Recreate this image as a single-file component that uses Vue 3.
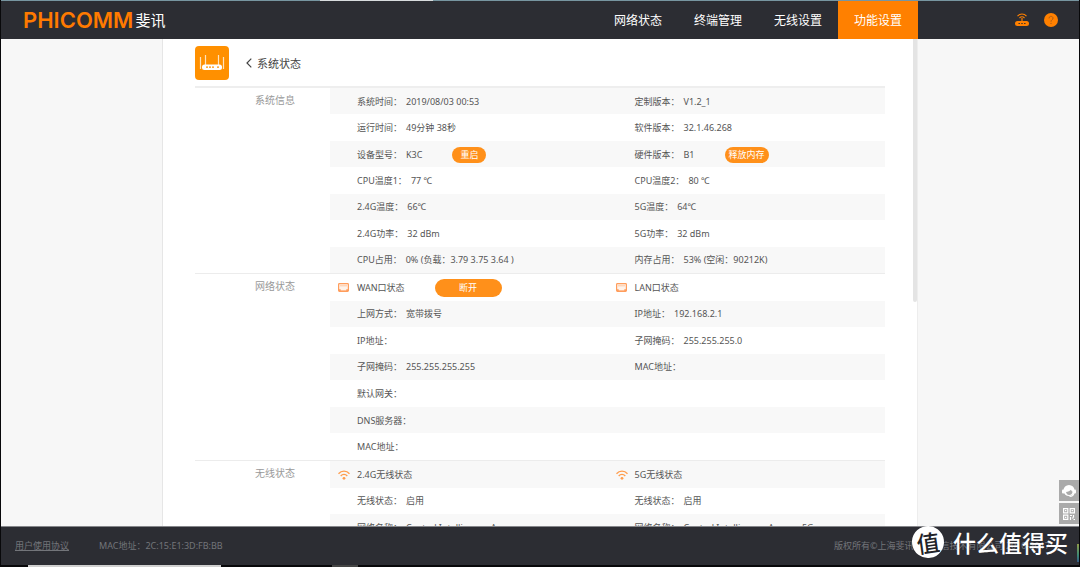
<script setup>
const sections = [
  {
    title: '系统信息',
    rows: [
      [{ label: '系统时间：', value: '2019/08/03 00:53' }, { label: '定制版本：', value: 'V1.2_1' }],
      [{ label: '运行时间：', value: '49分钟 38秒' }, { label: '软件版本：', value: '32.1.46.268' }],
      [
        { label: '设备型号：', value: 'K3C', action: '重启' },
        { label: '硬件版本：', value: 'B1', action: '释放内存', fit: true },
      ],
      [{ label: 'CPU温度1：', value: '77 ℃' }, { label: 'CPU温度2：', value: '80 ℃' }],
      [{ label: '2.4G温度：', value: '66℃' }, { label: '5G温度：', value: '64℃' }],
      [{ label: '2.4G功率：', value: '32 dBm' }, { label: '5G功率：', value: '32 dBm' }],
      [
        { label: 'CPU占用：', value: '0% (负载：3.79 3.75 3.64 )' },
        { label: '内存占用：', value: '53% (空闲：90212K)' },
      ],
    ],
  },
  {
    title: '网络状态',
    rows: [
      [
        { icon: 'port', label: 'WAN口状态', action: '断开', wide: true },
        { icon: 'port', label: 'LAN口状态' },
      ],
      [{ label: '上网方式：', value: '宽带拨号' }, { label: 'IP地址：', value: '192.168.2.1' }],
      [{ label: 'IP地址：' }, { label: '子网掩码：', value: '255.255.255.0' }],
      [{ label: '子网掩码：', value: '255.255.255.255' }, { label: 'MAC地址：' }],
      [{ label: '默认网关：' }],
      [{ label: 'DNS服务器：' }],
      [{ label: 'MAC地址：' }],
    ],
  },
  {
    title: '无线状态',
    rows: [
      [{ icon: 'wifi', label: '2.4G无线状态' }, { icon: 'wifi', label: '5G无线状态' }],
      [{ label: '无线状态：', value: '启用' }, { label: '无线状态：', value: '启用' }],
      [
        { label: '网络名称：', value: 'Central Intelligence Agency' },
        { label: '网络名称：', value: 'Central Intelligence Agency-5G' },
      ],
      [{}],
      [{}],
      [{}],
      [{}],
    ],
  },
]
const tabs = ['网络状态', '终端管理', '无线设置', '功能设置']
</script>

<template>
  <div class="page">
    <header class="topbar">
      <div class="logo"><span class="brand">PHICOMM</span><span class="brand-cn">斐讯</span></div>
      <nav class="tabs">
        <a v-for="(t, i) in tabs" :key="t" href="#" :class="['tab', { active: i === 3 }]">{{ t }}</a>
      </nav>
      <div class="tools">
        <button class="tool" aria-label="router">
          <svg width="14" height="14" viewBox="0 0 14 14" fill="none" stroke="#ff8000">
            <path d="M2.5 3.2C5 .2 9 .2 11.5 3.2M4.5 5C6 3.400 8 3.400 9.500 5" stroke-width="1.1" />
            <path d="M7 5V9" stroke-width="1.2" />
            <rect x="0" y="8" width="14" height="5" rx="2.5" fill="#ff8000" stroke="none" />
            <path d="M3.5 10.500h1.400M6.300 10.500h1.400M9.100 10.500h1.400" stroke="#2c2d33" stroke-width="1.1" />
          </svg>
        </button>
        <button class="tool" aria-label="help">
          <svg width="14" height="14" viewBox="0 0 14 14" fill="none">
            <circle cx="7" cy="7" r="7" fill="#ff8000" />
            <path d="M5 5.400C5 2.700 9 2.700 9 5.200C9 6.800 7 6.700 7 8.700M7 9.900V11" stroke="#a85a18" stroke-width="1" />
          </svg>
        </button>
      </div>
    </header>

    <main class="body">
      <div class="panel">
        <div class="heading">
          <svg class="router" width="34" height="34" viewBox="0 0 34 34" fill="none">
            <rect width="34" height="34" rx="4" fill="#ff9000" />
            <path d="M5.500 11v12M10.500 9v13M23.500 9v13M28.500 11v12" stroke="#ffe3bd" stroke-width="1.2" />
            <rect x="7" y="18.500" width="20" height="5.500" rx="2.500" fill="#fff" />
            <path d="M11 21.200h2M14 21.200h2M17 21.200h2M22 21.200h2" stroke="#ff9000" stroke-width="1.2" />
          </svg>
          <a class="back" href="#">
            <svg width="6" height="10" viewBox="0 0 6 10" fill="none"><path d="M5.300 .7L1 5l4.300 4.300" stroke="#444" stroke-width="1.2" /></svg>
            系统状态
          </a>
        </div>
        <section v-for="s in sections" :key="s.title" class="section">
          <h2 class="title">{{ s.title }}</h2>
          <div class="rows">
            <div v-for="(r, i) in s.rows" :key="i" class="row">
              <div v-for="(c, j) in r" :key="j" class="cell">
                <span class="mark">
                  <svg v-if="c.icon === 'port'" width="11" height="9" viewBox="0 0 11 9" fill="none">
                    <rect x=".6" y=".6" width="9.800" height="7.800" rx=".8" fill="#fff3ea" stroke="#ff9d5c" stroke-width="1.2" />
                    <path d="M2 2.800h7" stroke="#ffc9a3" />
                    <path d="M1 8V6.200h1.700V7.400h5.600V6.200H10V8z" fill="#ff9d5c" />
                  </svg>
                  <svg v-if="c.icon === 'wifi'" width="12" height="10" viewBox="0 0 12 10" fill="none" stroke="#ff9d4d" stroke-width="1.3">
                    <path d="M.5 3.700C3.500 .3 8.500 .3 11.500 3.700M2.700 6C4.600 3.900 7.400 3.900 9.300 6" />
                    <circle cx="6" cy="8.300" r="1.400" fill="#ff9d4d" stroke="none" />
                  </svg>
                </span>
                <span>{{ c.label }}</span>
                <span v-if="c.value" class="value">{{ c.value }}</span>
                <button v-if="c.action" :class="['pill', { wide: c.wide, fit: c.fit }]">{{ c.action }}</button>
              </div>
            </div>
          </div>
        </section>
        <div class="scroll"></div>
      </div>
      <div class="side">
        <button class="side-btn" aria-label="service">
          <svg width="14" height="14" viewBox="0 0 14 14" fill="none">
            <circle cx="7" cy="6.500" r="5.500" fill="#fff" />
            <path d="M4 8C6 8 8 7 9 5.800c.3 1 .8 1.600 1.600 2C10.200 10 9 11 7.200 11S4.500 10 4 8z" fill="#aaa" />
            <path d="M12 8c0 3-2 4.500-4.500 4.500" stroke="#fff" stroke-width="1.2" />
            <rect x="0" y="5.500" width="2.500" height="4" rx="1" fill="#fff" />
            <rect x="11.500" y="5.500" width="2.500" height="4" rx="1" fill="#fff" />
          </svg>
        </button>
        <button class="side-btn" aria-label="QR">
          <svg width="12" height="12" viewBox="0 0 12 12" fill="none" stroke="#fff">
            <path d="M.6 .6h4.200v4.200H.6zM7.200 .6h4.200v4.200H7.200zM.6 7.200h4.200v4.200H.6z" stroke-width="1.2" />
            <path d="M2 2.700h1.400M8.600 2.700H10M2 9.300h1.400M7 7.500h2M10.500 7v2.500M7.500 9v3M9 10h1.500M10.500 11.500H12" stroke-width="1.2" />
          </svg>
        </button>
      </div>
    </main>

    <footer class="foot">
      <a href="#" class="terms">用户使用协议</a>
      <span>MAC地址：2C:15:E1:3D:FB:BB</span>
      <span class="copy">版权所有©上海斐讯数据通信技术有限公司 2010-2017</span>
      <div class="watermark"><span class="disc">值</span><span>什么值得买</span></div>
      <div class="gauge"></div>
    </footer>
    <div class="edge"><div class="edge-light"></div><div class="edge-dim"></div></div>
  </div>
</template>

<style>
body {
  margin: 0;
  background: #000;
}
</style>

<style scoped>
.page {
  position: relative;
  display: flex;
  flex-direction: column;
  height: 100vh;
  overflow: hidden;
  background: #f7f7f7;
  color: #555;
  font: 9px/14px "Noto Sans", "Noto Sans CJK SC", sans-serif;
}
.page::after {
  content: "";
  position: absolute;
  inset: 0;
  border: solid #08080a;
  border-width: 0 1px;
  pointer-events: none;
}
button {
  border: 0;
  padding: 0;
  font: inherit;
  cursor: pointer;
}
a {
  color: inherit;
  text-decoration: none;
}
svg {
  display: block;
}
.topbar {
  position: relative;
  display: flex;
  flex: none;
  height: 39px;
  box-sizing: border-box;
  border-top: 1px solid #7795a0;
  background: #2c2d33;
}
.topbar::before {
  content: "";
  position: absolute;
  top: -1px;
  left: 320px;
  width: 113px;
  height: 1px;
  background: #d8dcde;
}
.logo {
  display: flex;
  align-items: center;
  gap: 2px;
  flex: 1;
  padding-left: 23px;
}
.brand {
  color: #ff7a00;
  font: 600 22px/24px Inter, sans-serif;
}
.brand-cn {
  color: #fff;
  font: 15px/24px "Noto Sans CJK SC", sans-serif;
}
.tabs {
  display: flex;
}
.tab {
  width: 80px;
  color: #fff;
  font: 12px/38px "Noto Sans CJK SC", sans-serif;
  text-align: center;
}
.active {
  background: #ff8000;
}
.tools {
  display: flex;
  align-items: center;
  justify-content: flex-end;
  gap: 15px;
  width: 15%;
  padding-right: 22px;
  box-sizing: border-box;
}
.tool {
  background: none;
}
.body {
  position: relative;
  flex: 1;
  min-height: 0;
  overflow: hidden;
}
.panel {
  position: relative;
  width: 70%;
  margin: 0 auto;
  padding: 0 32px;
  box-sizing: border-box;
  border-left: 1px solid #e6e6e6;
  border-right: 1px solid #ededed;
  background: #fff;
}
.heading {
  display: flex;
  align-items: center;
  gap: 17px;
  height: 47px;
}
.back {
  display: flex;
  align-items: center;
  gap: 5px;
  color: #444;
  font: 11px/16px "Noto Sans CJK SC", sans-serif;
}
.section {
  display: flex;
  min-height: 187px;
  box-sizing: border-box;
  border-top: 1px solid #ececec;
}
.heading + .section {
  border-top: 2px solid #eee;
}
.title {
  width: 135px;
  margin: 0;
  padding: 4px 0 0 60px;
  box-sizing: border-box;
  color: #999;
  font: 10px/16px "Noto Sans CJK SC", sans-serif;
}
.rows {
  display: grid;
  flex: 1;
  grid-auto-rows: 1fr;
}
.row {
  display: grid;
  grid-template-columns: 1fr 1fr;
}
.section:nth-of-type(odd) .row:nth-child(odd),
.section:nth-of-type(even) .row:nth-child(even) {
  background: #f8f8f8;
}
.cell {
  display: flex;
  align-items: center;
  padding-top: 1px;
  white-space: nowrap;
}
.mark {
  width: 19px;
  padding-left: 8px;
}
.value {
  margin-left: 4px;
}
.pill {
  width: 34px;
  height: 16px;
  margin-left: 30px;
  border-radius: 8px;
  background: #ff901a;
  color: #fff;
  line-height: 16px;
}
.fit {
  width: 44px;
}
.wide {
  width: 67px;
  height: 18px;
  border-radius: 9px;
  line-height: 18px;
}
.scroll {
  position: absolute;
  top: 0;
  right: 0;
  width: 4px;
  height: 263px;
  border-radius: 0 0 2px 2px;
  background: #e4e4e4;
}
.side {
  position: absolute;
  right: 1px;
  bottom: 2px;
  display: grid;
  gap: 2px;
}
.side-btn {
  display: grid;
  place-items: center;
  width: 20px;
  height: 21px;
  background: #aaa;
}
.foot {
  position: relative;
  display: flex;
  flex: none;
  align-items: center;
  gap: 30px;
  height: 39px;
  padding: 0 30px 0 15px;
  box-sizing: border-box;
  border-top: 1px solid #85868a;
  background: #2c2d33;
  color: #73757a;
}
.terms {
  text-decoration: underline;
}
.copy {
  margin-left: auto;
}
.watermark {
  position: absolute;
  right: 12px;
  bottom: 7px;
  display: flex;
  align-items: center;
  gap: 9px;
  color: #fff;
  font: 500 23px/32px "Noto Sans CJK SC", sans-serif;
}
.disc {
  width: 32px;
  height: 32px;
  border-radius: 50%;
  background: #fff;
  color: #222328;
  text-align: center;
  transform: rotate(-8deg);
}
.gauge {
  position: absolute;
  right: 1px;
  bottom: 3px;
  width: 2px;
  height: 18px;
  background: linear-gradient(#8f9b4a, #3e8a72 60%, #355a86);
}
.edge {
  display: flex;
  flex: none;
  gap: 111px;
  height: 2px;
  padding-left: 28px;
  background: #08080a;
}
.edge-light {
  width: 193px;
  background: #cfcfcf;
}
.edge-dim {
  width: 26px;
  background: #444;
}
</style>
